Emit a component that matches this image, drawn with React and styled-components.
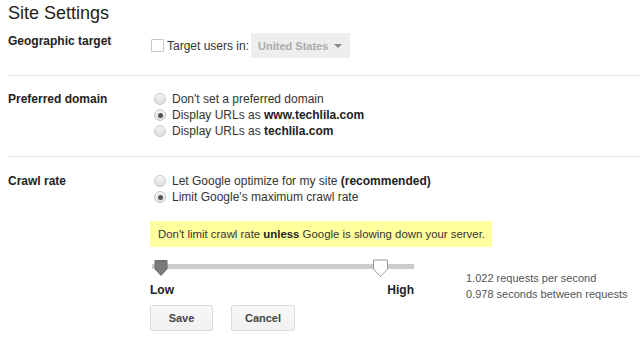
import React from 'react'
import styled, { createGlobalStyle } from 'styled-components'

const Global = createGlobalStyle`
  body {
    margin: 0;
    background: #fff;
    font-family: "Liberation Sans", Arial, sans-serif;
    color: #222;
  }
`

const Page = styled.div`
  width: 640px;
  height: 340px;
  overflow: hidden;
  padding-left: 8px;
  box-sizing: border-box;
`

const Title = styled.h1`
  margin: 0;
  padding-top: 2px;
  font-size: 18px;
  font-weight: normal;
  line-height: 22px;
  color: #222;
`

const Section = styled.div`
  display: grid;
  grid-template-columns: 142px 1fr;
  padding: ${p => p.$pad};
  border-bottom: ${p => (p.$last ? 'none' : '1px solid #e5e5e5')};
`

const Label = styled.div`
  font-size: 12px;
  font-weight: bold;
  line-height: 16px;
  color: #222;
`

const Controls = styled.div`
  display: flex;
  flex-direction: column;
`

const InlineRow = styled.div`
  display: flex;
  align-items: center;
  font-size: 12px;
  color: #333;
  white-space: nowrap;
`

const Checkbox = styled.span`
  width: 13px;
  height: 13px;
  box-sizing: border-box;
  border: 1px solid #c6c6c6;
  border-radius: 1px;
  background: #fff;
  margin: 0 3px 0 1px;
`

const Select = styled.div`
  width: 99px;
  height: 25px;
  box-sizing: border-box;
  background: #eeeeee;
  display: flex;
  align-items: center;
  justify-content: space-between;
  padding: 0 8px 0 7px;
  font-size: 11px;
  font-weight: bold;
  color: #aaa;
  margin-left: 2px;
  white-space: nowrap;
`

const Arrow = styled.span`
  width: 0;
  height: 0;
  border-left: 4px solid transparent;
  border-right: 4px solid transparent;
  border-top: 4px solid #888;
`

const RadioRow = styled.label`
  display: flex;
  align-items: center;
  height: 16px;
  font-size: 12px;
  color: #333;
  padding-left: 4px;
  white-space: nowrap;

  b {
    color: #222;
  }
`

const Radio = styled.span`
  flex: none;
  width: 12px;
  height: 12px;
  box-sizing: border-box;
  border-radius: 50%;
  border: 1px solid #c8c8c8;
  background: linear-gradient(#f6f6f6, #dedede);
  margin-right: 6px;
  display: flex;
  align-items: center;
  justify-content: center;

  &::after {
    content: '';
    display: ${p => (p.$checked ? 'block' : 'none')};
    width: 5px;
    height: 5px;
    border-radius: 50%;
    background: #555;
  }
`

const Notice = styled.div`
  margin-top: 16px;
  width: 342px;
  height: 26px;
  box-sizing: border-box;
  background: #ffff9e;
  font-size: 11.4px;
  line-height: 26px;
  color: #333;
  padding-left: 8px;
  white-space: nowrap;

  b {
    color: #222;
  }
`

const RateArea = styled.div`
  display: flex;
  align-items: flex-start;
  gap: 52px;
  margin-top: 12px;
`

const SliderBlock = styled.div`
  width: 264px;
  flex: none;
  display: flex;
  flex-direction: column;
`

const Track = styled.div`
  position: relative;
  height: 18px;
  margin-left: 2px;

  &::before {
    content: '';
    position: absolute;
    left: 0;
    right: 0;
    top: 5px;
    height: 5px;
    background: #cccccc;
  }
`

const Thumb = styled.svg`
  position: absolute;
  top: 0;
  left: ${p => p.$left}px;
`

const Ends = styled.div`
  display: flex;
  justify-content: space-between;
  font-size: 12px;
  font-weight: bold;
  color: #222;
  margin-top: 5px;
  line-height: 16px;
`

const Stats = styled.div`
  margin-top: 11px;
  font-size: 11px;
  line-height: 16px;
  color: #555;
  white-space: nowrap;
`

const Buttons = styled.div`
  display: flex;
  gap: 18px;
  margin-top: 7px;
`

const Button = styled.button`
  width: ${p => p.$w}px;
  height: 26px;
  background: linear-gradient(#f8f8f8, #f1f1f1);
  border: 1px solid #dcdcdc;
  border-radius: 2px;
  font-family: "Liberation Sans", Arial, sans-serif;
  font-size: 11px;
  font-weight: bold;
  color: #444;
  padding: 0;
`

const DarkThumb = () => (
  <Thumb $left={1} width="16" height="18" viewBox="0 0 16 18">
    <path d="M2 1.5 H14 V10 L8 16.5 L2 10 Z" fill="#7a7a7a" stroke="#6a6a6a" strokeWidth="1" strokeLinejoin="round" />
  </Thumb>
)

const LightThumb = () => (
  <Thumb $left={220} width="17" height="19" viewBox="0 0 17 19">
    <path d="M1.5 1 H15.5 V10 L8.5 17.5 L1.5 10 Z" fill="#fff" stroke="#9a9a9a" strokeWidth="1" strokeLinejoin="round" />
  </Thumb>
)

export default function App() {
  return (
    <Page>
      <Global />
      <Title>Site Settings</Title>

      <Section $pad="9px 0 17px">
        <Label>Geographic target</Label>
        <InlineRow>
          <Checkbox />
          <span>Target users in:</span>
          <Select>
            <span>United States</span>
            <Arrow />
          </Select>
        </InlineRow>
      </Section>

      <Section $pad="15px 0 17px">
        <Label>Preferred domain</Label>
        <Controls>
          <RadioRow><Radio /><span>Don't set a preferred domain</span></RadioRow>
          <RadioRow><Radio $checked /><span>Display URLs as <b>www.techlila.com</b></span></RadioRow>
          <RadioRow><Radio /><span>Display URLs as <b>techlila.com</b></span></RadioRow>
        </Controls>
      </Section>

      <Section $pad="16px 0 0" $last>
        <Label>Crawl rate</Label>
        <Controls>
          <RadioRow><Radio /><span>Let Google optimize for my site <b>(recommended)</b></span></RadioRow>
          <RadioRow><Radio $checked /><span>Limit Google's maximum crawl rate</span></RadioRow>
          <Notice>
            Don't limit crawl rate <b>unless</b> Google is slowing down your server.
          </Notice>
          <RateArea>
            <SliderBlock>
              <Track>
                <DarkThumb />
                <LightThumb />
              </Track>
              <Ends>
                <span>Low</span>
                <span>High</span>
              </Ends>
              <Buttons>
                <Button $w={63}>Save</Button>
                <Button $w={64}>Cancel</Button>
              </Buttons>
            </SliderBlock>
            <Stats>
              1.022 requests per second
              <br />
              0.978 seconds between requests
            </Stats>
          </RateArea>
        </Controls>
      </Section>
    </Page>
  )
}
